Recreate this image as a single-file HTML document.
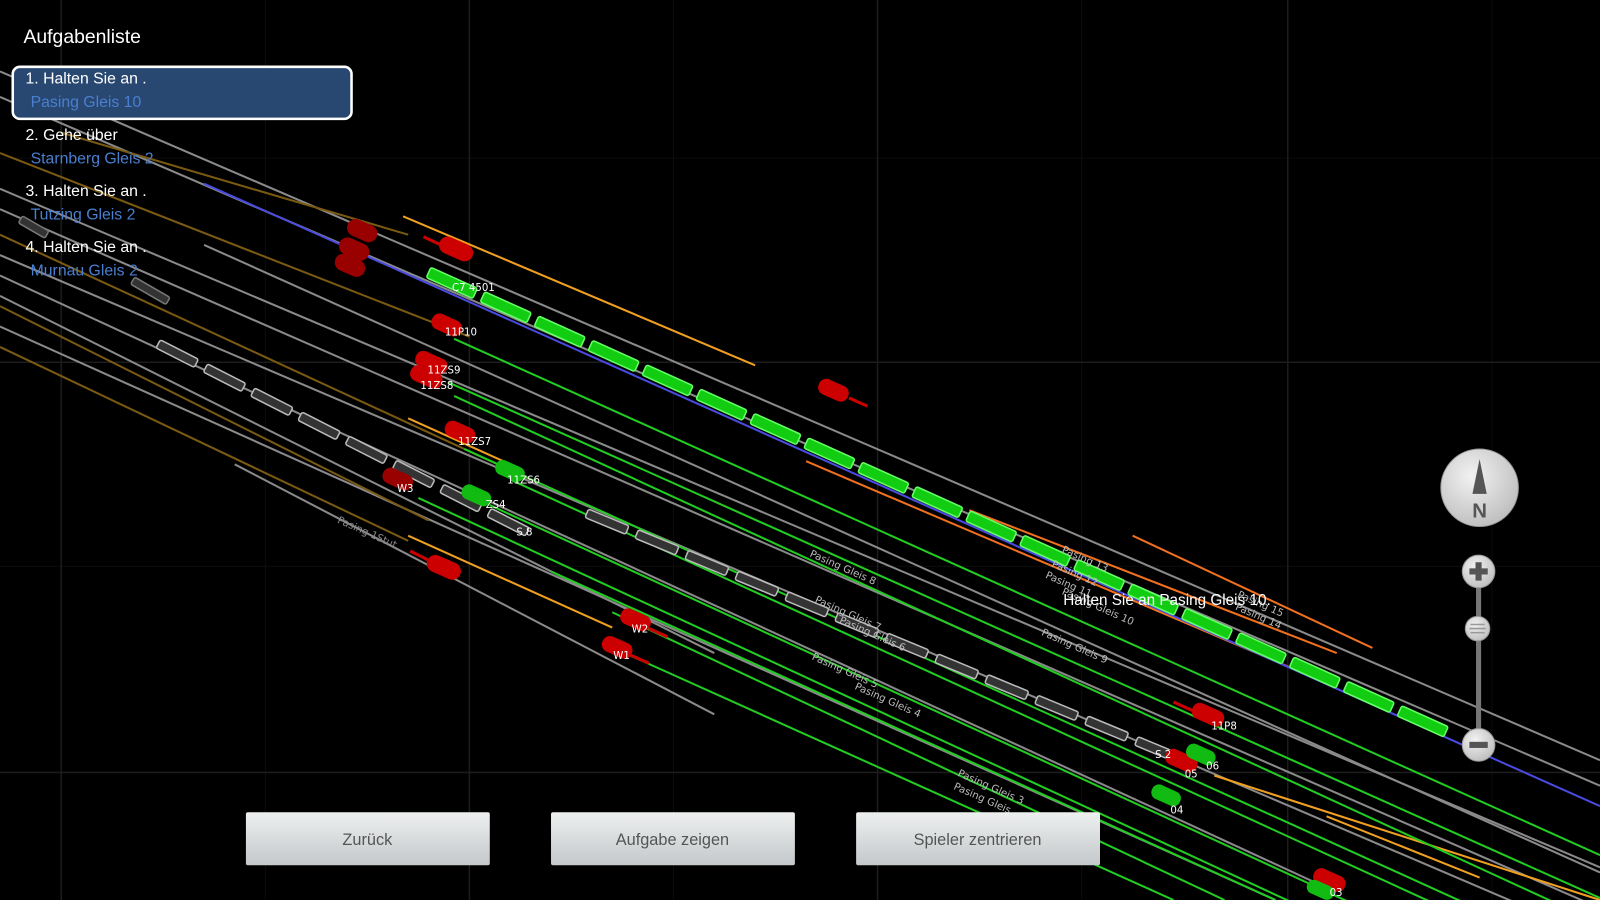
<!DOCTYPE html>
<html><head><meta charset="utf-8"><style>
html,body{margin:0;padding:0;background:#000;width:1600px;height:900px;overflow:hidden}
svg{display:block;position:absolute;left:0;top:0}
</style></head><body>
<svg id="s" width="1600" height="900" viewBox="0 0 1568 882" xmlns="http://www.w3.org/2000/svg" font-family="Liberation Sans, sans-serif" overflow="hidden">
<rect width="1568" height="882" fill="#000"/>
<g stroke="#0d0d0d" stroke-width="1">
<line x1="260" y1="0" x2="260" y2="882"/><line x1="660" y1="0" x2="660" y2="882"/><line x1="1060" y1="0" x2="1060" y2="882"/><line x1="1462" y1="0" x2="1462" y2="882"/>
<line x1="0" y1="155" x2="1568" y2="155"/><line x1="0" y1="555" x2="1568" y2="555"/>
</g>
<g stroke="#1c1c1c" stroke-width="1.5">
<line x1="60" y1="0" x2="60" y2="882"/><line x1="460" y1="0" x2="460" y2="882"/><line x1="860" y1="0" x2="860" y2="882"/><line x1="1262" y1="0" x2="1262" y2="882"/>
<line x1="0" y1="355" x2="1568" y2="355"/><line x1="0" y1="757" x2="1568" y2="757"/>
</g>
<g stroke="#8a8a8a" stroke-width="2" fill="none">
<line x1="0" y1="70" x2="1568" y2="745"/>
<line x1="0" y1="95" x2="1568" y2="770"/>
<line x1="0" y1="185" x2="1568" y2="850"/>
<line x1="0" y1="205" x2="1568" y2="890"/>
<line x1="200" y1="240" x2="1568" y2="855"/>
<line x1="0" y1="250" x2="1568" y2="920"/>
<line x1="0" y1="270" x2="1300" y2="870"/>
<line x1="0" y1="320" x2="1250" y2="882"/>
<line x1="230" y1="455" x2="700" y2="700"/>
<line x1="0" y1="290" x2="700" y2="640"/>
</g>
<g stroke="#7a5a12" stroke-width="2" fill="none">
<line x1="0" y1="150" x2="460" y2="330"/>
<line x1="0" y1="230" x2="520" y2="470"/>
<line x1="0" y1="300" x2="420" y2="510"/>
<line x1="0" y1="340" x2="400" y2="530"/>
<line x1="60" y1="130" x2="400" y2="230"/>
</g>
<g stroke="#f0a020" stroke-width="2" fill="none">
<line x1="395" y1="212" x2="740" y2="358"/>
<line x1="400" y1="410" x2="500" y2="455"/>
<line x1="400" y1="525" x2="600" y2="615"/>
<line x1="1190" y1="760" x2="1568" y2="882"/>
<line x1="1300" y1="800" x2="1450" y2="860"/>
</g>
<g stroke="#f07020" stroke-width="2" fill="none">
<line x1="790" y1="452" x2="1290" y2="665"/>
<line x1="950" y1="500" x2="1310" y2="640"/>
<line x1="1110" y1="525" x2="1345" y2="635"/>
</g>
<line x1="200" y1="180" x2="1568" y2="790" stroke="#4a4ae0" stroke-width="2"/>
<g stroke="#22cc22" stroke-width="2" fill="none">
<line x1="445" y1="332" x2="1568" y2="838"/>
<line x1="440" y1="375" x2="1568" y2="880"/>
<line x1="445" y1="388" x2="1568" y2="905"/>
<line x1="455" y1="440" x2="1568" y2="945"/>
<line x1="500" y1="470" x2="1568" y2="960"/>
<line x1="480" y1="495" x2="1400" y2="920"/>
<line x1="410" y1="488" x2="1300" y2="900"/>
<line x1="600" y1="600" x2="1200" y2="882"/>
<line x1="590" y1="630" x2="1150" y2="882"/>
<line x1="540" y1="560" x2="1250" y2="882"/>
</g>
<g id="trains"></g>
<g fill="#cc0000" stroke="#cc0000">
<rect x="430" y="236" width="34" height="16" rx="8" transform="rotate(24 447 244)"/><line x1="415" y1="232" x2="432" y2="240" stroke-width="3"/>
<rect x="340" y="218" width="30" height="16" rx="8" transform="rotate(24 355 226)" fill="#900" stroke="#900"/>
<rect x="332" y="236" width="30" height="16" rx="8" transform="rotate(24 347 244)" fill="#900" stroke="#900"/>
<rect x="328" y="252" width="30" height="16" rx="8" transform="rotate(24 343 260)" fill="#900" stroke="#900"/>
<rect x="423" y="311" width="30" height="15" rx="7" transform="rotate(24 438 318)"/>
<rect x="407" y="348" width="32" height="15" rx="7" transform="rotate(24 423 355)"/>
<rect x="402" y="362" width="32" height="15" rx="7" transform="rotate(24 418 369)"/>
<rect x="436" y="416" width="30" height="15" rx="7" transform="rotate(24 451 423)"/>
<rect x="802" y="375" width="30" height="15" rx="7" transform="rotate(24 817 382)"/><line x1="832" y1="390" x2="850" y2="398" stroke-width="3"/>
<rect x="418" y="548" width="34" height="16" rx="8" transform="rotate(24 435 556)"/><line x1="402" y1="540" x2="420" y2="549" stroke-width="3"/>
<rect x="608" y="600" width="30" height="15" rx="7" transform="rotate(24 623 607)"/><line x1="636" y1="616" x2="654" y2="624" stroke-width="3"/>
<rect x="590" y="627" width="30" height="15" rx="7" transform="rotate(24 605 634)"/><line x1="618" y1="642" x2="636" y2="650" stroke-width="3"/>
<rect x="375" y="462" width="30" height="15" rx="7" transform="rotate(24 390 469)" fill="#900" stroke="#900"/>
<rect x="1168" y="693" width="32" height="15" rx="7" transform="rotate(24 1184 700)"/><line x1="1150" y1="688" x2="1170" y2="697" stroke-width="3"/>
<rect x="1142" y="738" width="32" height="15" rx="7" transform="rotate(24 1158 745)"/>
<rect x="1287" y="855" width="32" height="15" rx="7" transform="rotate(24 1303 862)"/>
</g>
<g fill="#11bb11">
<rect x="485" y="454" width="30" height="15" rx="7" transform="rotate(24 500 461)"/>
<rect x="452" y="478" width="30" height="15" rx="7" transform="rotate(24 467 485)"/>
<rect x="1162" y="732" width="30" height="15" rx="7" transform="rotate(24 1177 739)"/>
<rect x="1128" y="772" width="30" height="15" rx="7" transform="rotate(24 1143 779)"/>
<rect x="1280" y="865" width="28" height="14" rx="7" transform="rotate(24 1294 872)"/>
</g>
<g fill="#fff" font-family="DejaVu Sans, sans-serif" font-size="10">
<text x="443" y="285">C7 4501</text><text x="436" y="329">11P10</text><text x="419" y="366">11ZS9</text><text x="412" y="381">11ZS8</text>
<text x="449" y="436">11ZS7</text><text x="497" y="474">11ZS6</text><text x="476" y="498">ZS4</text><text x="506" y="525">S 8</text>
<text x="389" y="482">W3</text><text x="619" y="620">W2</text><text x="601" y="646">W1</text>
<text x="1187" y="715">11P8</text><text x="1182" y="754">06</text><text x="1161" y="762">05</text><text x="1147" y="797">04</text><text x="1303" y="878">03</text><text x="1132" y="743">S 2</text>
</g>
<g fill="#bbb" font-family="DejaVu Sans, sans-serif" font-size="10">
<text transform="translate(793,545) rotate(24)">Pasing Gleis 8</text>
<text transform="translate(798,590) rotate(24)">Pasing Gleis 7</text>
<text transform="translate(822,610) rotate(24)">Pasing Gleis 6</text>
<text transform="translate(795,646) rotate(24)">Pasing Gleis 5</text>
<text transform="translate(837,675) rotate(24)">Pasing Gleis 4</text>
<text transform="translate(938,760) rotate(24)">Pasing Gleis 3</text>
<text transform="translate(934,773) rotate(24)">Pasing Gleis</text>
<text transform="translate(1020,622) rotate(24)">Pasing Gleis 9</text>
<text transform="translate(1040,582) rotate(24)">Pasing Gleis 10</text>
<text transform="translate(1024,566) rotate(24)">Pasing 11</text>
<text transform="translate(1030,555) rotate(24)">Pasing 12</text>
<text transform="translate(1040,541) rotate(24)">Pasing 13</text>
<text transform="translate(1210,597) rotate(24)">Pasing 14</text>
<text transform="translate(1212,585) rotate(24)">Pasing 15</text>
<text transform="translate(330,512) rotate(24)" fill="#888">Pasing 1Stut</text>
</g>
<text x="1042" y="593" fill="#fff" font-size="15">Halten Sie an  Pasing Gleis 10.</text>
<text x="23" y="42" fill="#fff" font-size="19" font-family="Liberation Sans Narrow, Liberation Sans, sans-serif">Aufgabenliste</text>
<rect x="12.5" y="65.5" width="332" height="51" rx="7" fill="#284872" stroke="#fff" stroke-width="2.5"/>
<g font-size="15.5">
<text x="25" y="82" fill="#fff">1. Halten Sie an  .</text><text x="30" y="105" fill="#4a7fd0">Pasing Gleis 10</text>
<text x="25" y="137" fill="#fff">2. Gehe über</text><text x="30" y="160" fill="#4a7fd0">Starnberg Gleis 2</text>
<text x="25" y="192" fill="#fff">3. Halten Sie an  .</text><text x="30" y="215" fill="#4a7fd0">Tutzing Gleis 2</text>
<text x="25" y="247" fill="#fff">4. Halten Sie an  .</text><text x="30" y="270" fill="#4a7fd0">Murnau Gleis 2</text>
</g>
<defs>
<linearGradient id="bg" x1="0" y1="0" x2="0" y2="1"><stop offset="0" stop-color="#eef0f0"/><stop offset="1" stop-color="#c4c8ca"/></linearGradient>
<radialGradient id="cg" cx="0.4" cy="0.35" r="0.7"><stop offset="0" stop-color="#f2f2f2"/><stop offset="1" stop-color="#bdbdbd"/></radialGradient>
</defs>
<g font-size="16" fill="#555" text-anchor="middle" font-family="Liberation Sans Narrow, Liberation Sans, sans-serif">
<rect x="241" y="796" width="239" height="52" rx="2" fill="url(#bg)"/><text x="360" y="828" fill="#555">Zurück</text>
<rect x="540" y="796" width="239" height="52" rx="2" fill="url(#bg)"/><text x="659" y="828" fill="#555">Aufgabe zeigen</text>
<rect x="839" y="796" width="239" height="52" rx="2" fill="url(#bg)"/><text x="958" y="828" fill="#555">Spieler zentrieren</text>
</g>
<line x1="1449" y1="560" x2="1449" y2="730" stroke="#777" stroke-width="5"/>
<circle cx="1450" cy="478" r="38" fill="url(#cg)" stroke="#999"/>
<polygon points="1450,450 1443,484 1457,484" fill="#555"/>
<text x="1450" y="507" text-anchor="middle" font-size="20" font-weight="bold" fill="#555">N</text>
<circle cx="1449" cy="560" r="16" fill="url(#cg)" stroke="#999"/>
<path d="M1446 551h6v6h6v6h-6v6h-6v-6h-6v-6h6z" fill="#555"/>
<circle cx="1448" cy="616" r="12" fill="url(#cg)" stroke="#999"/>
<g stroke="#999" stroke-width="1.5"><line x1="1441" y1="612" x2="1455" y2="612"/><line x1="1440" y1="616" x2="1456" y2="616"/><line x1="1441" y1="620" x2="1455" y2="620"/></g>
<circle cx="1449" cy="730" r="16" fill="url(#cg)" stroke="#999"/>
<rect x="1440" y="727" width="18" height="6" fill="#555"/>
</svg>
<script>
var g=document.getElementById('trains'),ns='http://www.w3.org/2000/svg';
function seg(x,y,len,ang,fill,stroke,w){var r=document.createElementNS(ns,'rect');r.setAttribute('x',x);r.setAttribute('y',y-w/2);r.setAttribute('width',len);r.setAttribute('height',w);r.setAttribute('rx',2);r.setAttribute('fill',fill);r.setAttribute('stroke',stroke);r.setAttribute('stroke-width',1.5);r.setAttribute('transform','rotate('+ang+' '+x+' '+y+')');g.appendChild(r);}
var a=24.3,c=Math.cos(a*Math.PI/180),s=Math.sin(a*Math.PI/180);
for(var i=0;i<19;i++){var d=i*58;seg(420+d*c,267+d*s,50,a,'#11cc11','#66ff66',11);}
var a2=27,c2=Math.cos(a2*Math.PI/180),s2=Math.sin(a2*Math.PI/180);
for(var i=0;i<8;i++){var d=i*52;seg(155+d*c2,337+d*s2,42,a2,'#333','#bbb',9);}
var a3=22.5,c3=Math.cos(a3*Math.PI/180),s3=Math.sin(a3*Math.PI/180);
for(var i=0;i<12;i++){var d=i*53;seg(575+d*c3,503+d*s3,43,a3,'#333','#bbb',9);}
seg(130,275,40,30,'#333','#777',8);seg(20,215,30,30,'#333','#777',8);
</script>
</body></html>
